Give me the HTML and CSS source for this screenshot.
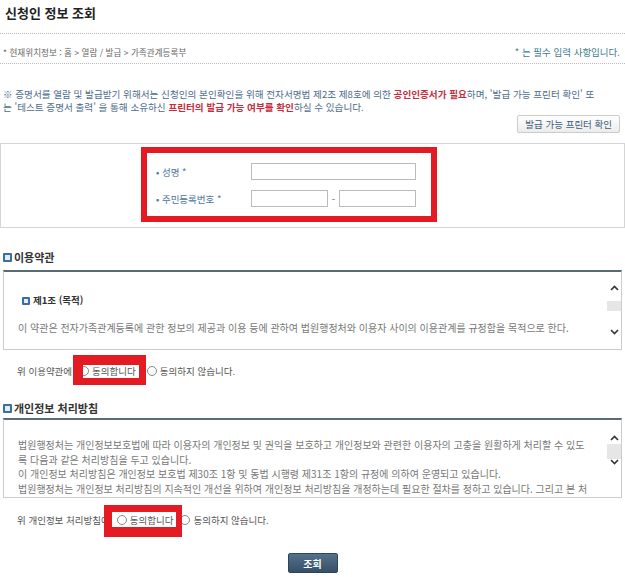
FILE: index.html
```html
<!DOCTYPE html>
<html lang="ko">
<head>
<meta charset="utf-8">
<title>신청인 정보 조회</title>
<link rel="stylesheet" href="styles.css">
</head>
<body>
<div class="page">
  <h1 class="title">신청인 정보 조회</h1>
  <div class="crumb">
    <span>* 현재위치정보 : 홈 &gt; 열람 / 발급 &gt; 가족관계등록부</span>
    <span class="req">* 는 필수 입력 사항입니다.</span>
  </div>
  <p class="notice">※ 증명서를 열람 및 발급받기 위해서는 신청인의 본인확인을 위해 전자서명법 제2조 제8호에 의한 <b class="hl">공인인증서가 필요</b>하며, '발급 가능 프린터 확인' 또<br>는 '테스트 증명서 출력' 을 통해 소유하신 <b class="hl">프린터의 발급 가능 여부를 확인</b>하실 수 있습니다.</p>
  <div class="btn-row"><button class="btn-light" type="button">발급 가능 프린터 확인</button></div>

  <div class="form-box">
    <div class="mark-box">
      <div class="frow"><span class="flabel">• 성명 *</span><input class="inp inp-name" type="text"></div>
      <div class="frow"><span class="flabel">• 주민등록번호 *</span><input class="inp inp-rrn" type="text"><span class="dash">-</span><input class="inp inp-rrn" type="text"></div>
    </div>
  </div>

  <h2 class="sec-title"><span class="ico"></span>이용약관</h2>
  <div class="scroll-box">
    <div class="scroll-content terms">
      <div class="art-title"><span class="ico ico-sm"></span>제1조 (목적)</div>
      <div class="art-body">이 약관은 전자가족관계등록에 관한 정보의 제공과 이용 등에 관하여 법원행정처와 이용자 사이의 이용관계를 규정함을 목적으로 한다.</div>
    </div>
    <div class="sb">
      <svg class="arr" width="9" height="6" viewBox="0 0 9 6"><path d="M1 5 L4.5 1.5 L8 5" fill="none" stroke="#333" stroke-width="1.6"/></svg>
      <div class="thumb"></div>
      <svg class="arr arr-down" width="9" height="6" viewBox="0 0 9 6"><path d="M1 1 L4.5 4.5 L8 1" fill="none" stroke="#333" stroke-width="1.6"/></svg>
    </div>
  </div>
  <div class="agree">
    <span class="agree-label">위 이용약관에</span>
    <label class="mark mark-1"><input class="radio" type="radio" name="a1"><span>동의합니다</span></label>
    <label class="opt opt-1"><input class="radio" type="radio" name="a1"><span>동의하지 않습니다.</span></label>
  </div>

  <h2 class="sec-title sec-2"><span class="ico"></span>개인정보 처리방침</h2>
  <div class="scroll-box">
    <div class="scroll-content privacy">
      <div class="pline">법원행정처는 개인정보보호법에 따라 이용자의 개인정보 및 권익을 보호하고 개인정보와 관련한 이용자의 고충을 원활하게 처리할 수 있도</div>
      <div class="pline">록 다음과 같은 처리방침을 두고 있습니다.</div>
      <div class="pline">이 개인정보 처리방침은 개인정보 보호법 제30조 1항 및 동법 시행령 제31조 1항의 규정에 의하여 운영되고 있습니다.</div>
      <div class="pline">법원행정처는 개인정보 처리방침의 지속적인 개선을 위하여 개인정보 처리방침을 개정하는데 필요한 절차를 정하고 있습니다. 그리고 본 처</div>
    </div>
    <div class="sb sb-2">
      <svg class="arr" width="9" height="6" viewBox="0 0 9 6"><path d="M1 5 L4.5 1.5 L8 5" fill="none" stroke="#333" stroke-width="1.6"/></svg>
      <div class="thumb"></div>
      <svg class="arr arr-down" width="9" height="6" viewBox="0 0 9 6"><path d="M1 1 L4.5 4.5 L8 1" fill="none" stroke="#333" stroke-width="1.6"/></svg>
    </div>
  </div>
  <div class="agree agree-2">
    <span class="agree-label">위 개인정보 처리방침에</span>
    <label class="mark mark-2"><input class="radio" type="radio" name="a2"><span>동의합니다</span></label>
    <label class="opt opt-2"><input class="radio" type="radio" name="a2"><span>동의하지 않습니다.</span></label>
  </div>

  <div class="submit-row"><button class="btn-submit" type="button">조회</button></div>
</div>
</body>
</html>
```

FILE: styles.css
```css
html, body {
  margin: 0;
  padding: 0;
  background: #fff;
}
body {
  font-family: "Noto Sans CJK KR", "Noto Sans", sans-serif;
  font-size: 9.5px;
  color: #666;
}
.page {
  width: 625px;
}
.title {
  margin: 0;
  padding: 5px 0 12px 5px;
  font-size: 13px;
  line-height: 16px;
  font-weight: 700;
  color: #222;
  border-bottom: 1px dotted #bbb;
}
.crumb {
  display: flex;
  justify-content: space-between;
  padding: 12px 5px 5px 3px;
  font-size: 8.6px;
  line-height: 12px;
  color: #666;
  border-bottom: 1px dotted #bbb;
}
.req {
  font-size: 9.5px;
  color: #3c7d8e;
}
.notice {
  margin: 24px 0 0 3px;
  font-size: 9.6px;
  line-height: 12.5px;
  color: #4d6b8a;
  white-space: nowrap;
}
.hl {
  color: #c62c3c;
  font-weight: 700;
}
.btn-row {
  display: flex;
  justify-content: flex-end;
  padding-right: 5px;
  margin-top: 2px;
}
.btn-light {
  height: 18px;
  padding: 0 7px;
  margin: 0;
  border: 1px solid #ccc;
  border-radius: 2px;
  background: linear-gradient(#fff, #ececec);
  color: #3d5d7d;
  font-family: inherit;
  font-size: 9.5px;
  line-height: 16px;
}
.form-box {
  margin-top: 10px;
  border: 1px solid #d5d5d5;
  padding: 3px 0 5px 140px;
}
.mark-box {
  width: 296px;
  box-sizing: border-box;
  border: 6px solid #e41b23;
  padding: 10px 0 9px 9px;
  display: flex;
  flex-direction: column;
  gap: 10px;
}
.frow {
  display: flex;
  align-items: center;
  height: 17px;
}
.flabel {
  width: 95px;
  color: #4a72a0;
}
.inp {
  height: 17px;
  box-sizing: border-box;
  border: 1px solid #bbb;
  padding: 0;
  margin: 0;
  background: #fff;
}
.inp-name { width: 165px; }
.inp-rrn { width: 77px; }
.dash {
  width: 11px;
  text-align: center;
  color: #666;
}
.sec-title {
  display: flex;
  align-items: center;
  gap: 2px;
  margin: 22px 0 6px 3px;
  font-size: 11px;
  line-height: 14px;
  font-weight: 700;
  color: #333;
}
.sec-2 {
  margin-top: 23px;
  margin-bottom: 3px;
}
.ico {
  width: 5px;
  height: 5px;
  border: 2px solid #3c6ea0;
  border-radius: 1px;
  background: #e3edf7;
}
.ico-sm {
  width: 4px;
  height: 4px;
}
.scroll-box {
  display: flex;
  height: 80px;
  box-sizing: border-box;
  margin: 0 3px;
  border: 1px solid #ccc;
  border-top: 2px solid #5b6b73;
  overflow: hidden;
}
.scroll-content {
  flex: 1;
  padding-left: 14px;
  font-size: 10px;
  color: #777;
  line-height: 13px;
  white-space: nowrap;
  overflow: hidden;
}
.art-title {
  display: flex;
  align-items: center;
  gap: 3px;
  margin: 22px 0 0 4px;
  font-size: 9.5px;
  font-weight: 700;
  color: #333;
}
.art-body {
  margin-top: 14px;
}
.privacy {
  padding-top: 18px;
  line-height: 14.5px;
}
.sb {
  width: 14px;
  display: flex;
  flex-direction: column;
  align-items: center;
  padding-top: 13px;
}
.thumb {
  width: 14px;
  height: 10px;
  margin-top: 10px;
  background: #e6e6e6;
}
.arr-down {
  margin-top: 18px;
}
.sb-2 {
  padding-top: 15px;
}
.sb-2 .thumb {
  margin-top: 3px;
  height: 15px;
}
.sb-2 .arr-down {
  margin-top: 0;
}
.agree {
  display: flex;
  align-items: center;
  margin: 14px 0 0 17px;
  line-height: 14px;
  color: #555;
}
.radio {
  appearance: none;
  -webkit-appearance: none;
  width: 10px;
  height: 10px;
  margin: 0;
  border: 1px solid #888;
  border-radius: 50%;
  background: #fff;
}
.mark, .opt {
  display: inline-flex;
  align-items: center;
  gap: 3px;
}
.mark {
  position: relative;
}
.mark::after {
  content: "";
  position: absolute;
  border-style: solid;
  border-color: #e41b23;
  pointer-events: none;
}
.mark-1 { margin-left: 7px; }
.mark-1::after {
  left: -6px;
  right: -10px;
  top: -9px;
  bottom: -7px;
  border-width: 10px 7px 7px 10px;
}
.opt-1 { margin-left: 11px; }
.agree-2 {
  margin-top: 15px;
}
.mark-2 { margin-left: 7px; }
.mark-2::after {
  left: -13px;
  right: -9px;
  top: -8px;
  bottom: -10px;
  border-width: 7px 6px 10px 8px;
}
.opt-2 { margin-left: 7px; }
.submit-row {
  display: flex;
  justify-content: center;
  margin-top: 26px;
}
.btn-submit {
  width: 50px;
  height: 20px;
  margin: 0;
  padding: 0;
  border: 1px solid #2e4556;
  border-radius: 2px;
  background: linear-gradient(#55708a, #36506a);
  color: #fff;
  font-family: inherit;
  font-size: 10px;
  font-weight: 700;
}
```
